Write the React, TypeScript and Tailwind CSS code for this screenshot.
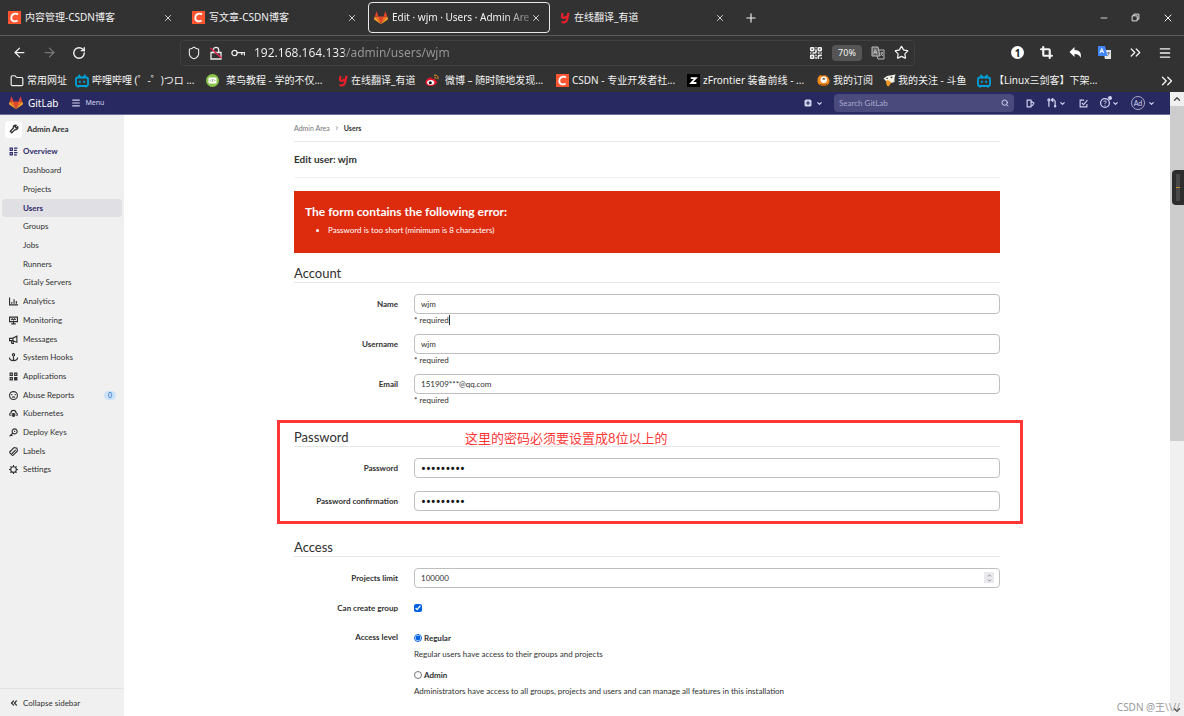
import React, { FC, ReactNode } from "react";
import {
  ArrowLeft,
  ArrowRight,
  ChevronDown,
  ChevronRight,
  ChevronUp,
  ChevronsLeft,
  ChevronsRight,
  Crop,
  Folder,
  Menu,
  Minus,
  Plus,
  QrCode,
  RotateCw,
  Search,
  Shield,
  Star,
  X,
} from "lucide-react";

interface IconProps {
  className?: string;
}

interface GlyphProps extends IconProps {
  children: ReactNode;
}

// 16px grid, outlined icon
const Glyph: FC<GlyphProps> = ({ className = "size-[9px]", children }) => (
  <svg
    viewBox="0 0 16 16"
    className={`shrink-0 ${className}`}
    fill="none"
    stroke="currentColor"
    strokeWidth="2"
    aria-hidden="true"
  >
    {children}
  </svg>
);

const Tanuki: FC<IconProps> = ({ className = "size-[14px]" }) => (
  <svg viewBox="0 0 36 34" className={`shrink-0 ${className}`} aria-hidden="true">
    <path d="M18 33 24.6 13H11.4z" fill="#e24329" />
    <path d="M18 33 11.4 13H2.1z" fill="#fc6d26" />
    <path d="M2.1 13 .1 19.2c-.2.6 0 1.2.5 1.5L18 33z" fill="#fca326" />
    <path d="M2.1 13h9.3L7.4.8c-.2-.6-1.1-.6-1.3 0z" fill="#e24329" />
    <path d="M18 33 24.6 13h9.3z" fill="#fc6d26" />
    <path d="m33.9 13 2 6.2c.2.6 0 1.2-.5 1.5L18 33z" fill="#fca326" />
    <path d="M33.9 13h-9.3l4-12.2c.2-.6 1.1-.6 1.3 0z" fill="#e24329" />
  </svg>
);

const CsdnLogo: FC = () => (
  <span className="flex size-[13px] shrink-0 items-center justify-center bg-[#fc5531]">
    <svg viewBox="0 0 13 13" className="size-[13px]" fill="none" stroke="#fff" strokeWidth="1.8">
      <path d="M10 3.4C8.4 2.3 3.800 1.800 3.300 6.400c-.4 4.200 3.700 4.400 6.300 3.300" />
    </svg>
  </span>
);

const YoudaoLogo: FC = () => (
  <svg viewBox="0 0 10 12" className="h-3 w-[10px] shrink-0" fill="none" stroke="#e8202c" strokeWidth="2.2">
    <path d="M2.500 1 2 4.500c-.2 2 3.500 1.700 4.500-.5M8.500.8 7.200 7c-.6 3-3.200 4-5.700 3" />
  </svg>
);

const BiliLogo: FC = () => (
  <svg viewBox="0 0 14 14" className="size-[14px] shrink-0" fill="none" stroke="#00a1d6" strokeWidth="1.8">
    <rect x="1" y="3.500" width="12" height="8.500" rx="1.500" />
    <path d="M3.500.8 5.600 3.300M10.500.8 8.400 3.300M4.800 6.800v2M9.200 6.800v2M3 12v1.500M11 12v1.500" />
  </svg>
);

const RunoobLogo: FC = () => (
  <svg viewBox="0 0 13 13" className="size-[13px] shrink-0">
    <circle cx="6.500" cy="6.500" r="6.500" fill="#8bc34a" />
    <rect x="2.500" y="3.500" width="8" height="6" rx="1" fill="#fff" />
    <path d="m5 5.500-1 1 1 1M8 5.500l1 1-1 1M6.800 5.200l-.6 2.600" fill="none" stroke="#558b2f" strokeWidth=".7" />
  </svg>
);

const WeiboLogo: FC = () => (
  <svg viewBox="0 0 14 13" className="h-[13px] w-[14px] shrink-0">
    <path d="M.5 8.500c0-3 5-6 6-4.500.4.6 0 1.200 0 1.200s3.500-1.400 3.800 1c1.600.6 2 1.500 1.400 2.900C10 13 .5 13 .5 8.500z" fill="#e6162d" />
    <ellipse cx="5.700" cy="8.600" rx="3.600" ry="2.500" fill="#fff" />
    <circle cx="5.300" cy="8.700" r="1.500" fill="#111" />
    <path d="M9 1.200c3-.6 4.600 1.400 3.900 4M9.300 3.200c1.300-.3 2 .6 1.700 1.700" fill="none" stroke="#f7931e" strokeWidth="1" />
  </svg>
);

const ZLogo: FC = () => (
  <svg viewBox="0 0 13 13" className="size-[13px] shrink-0">
    <path d="M0 0h13v13H0z" fill="#000" />
    <path d="M3.800 4.100h5L4.200 9h5.200" fill="none" stroke="#fff" strokeWidth="1.800" />
  </svg>
);

const FeedLogo: FC = () => (
  <svg viewBox="0 0 13 13" className="size-[13px] shrink-0">
    <path d="M1 3.500 3 1l2 .8 3.500-.6L11 3l1.500 3c.8 8-12.500 8-12 0z" fill="#f58a1f" />
    <circle cx="6.800" cy="5.800" r="3.200" fill="#fff" />
    <path d="M5.300 5.500a1.500 1.500 0 0 1 3 0z" fill="#4a2a10" />
    <path d="M3 10.300c2 1.200 5 1.200 7 0" stroke="#7a3b0a" fill="none" />
  </svg>
);

const DouyuLogo: FC = () => (
  <svg viewBox="0 0 13 13" className="size-[13px] shrink-0">
    <path d="M.5 4.500 4 2l8.500-1.500-1 3.500v4l-3.500 1-4-1z" fill="#f3f0e6" />
    <path d="M3.500 6.500c2-.5 4 .5 4.500 2.500l-2.500 3.500C3.500 12 2.500 9 3.500 6.500z" fill="#f59a23" />
    <path d="m2.500 4.500 2-1 .5 1.500zM7 3l2.500-.5L9 4.500z" fill="#333" />
  </svg>
);

interface TabProps {
  icon: ReactNode;
  title: string;
  isActive?: boolean;
}

const Tab: FC<TabProps> = ({ icon, title, isActive }) => (
  <div
    className={`flex h-[31px] w-[182px] shrink-0 items-center rounded-sm border pr-2 ${
      isActive ? "border-[#e8e8e8] pl-[5px]" : "border-transparent pl-[7px]"
    }`}
  >
    <button type="button" className="flex min-w-0 flex-1 items-center gap-1">
      {icon}
      <span
        className={`whitespace-nowrap ${
          isActive ? "[mask-image:linear-gradient(to_right,#000_82%,rgba(0,0,0,0.3))]" : ""
        }`}
      >
        {title}
      </span>
    </button>
    <button type="button" aria-label="Close tab">
      <X className="size-[10px]" strokeWidth={2} />
    </button>
  </div>
);

const bookmarks = [
  { icon: <Folder className="size-[14px] shrink-0" strokeWidth={2} />, label: "常用网址", width: "w-[65px]" },
  { icon: <BiliLogo />, label: "哔哩哔哩 (゜-゜)つロ ...", width: "w-[131px]" },
  { icon: <RunoobLogo />, label: "菜鸟教程 - 学的不仅...", width: "w-[132px]", gap: "gap-[7px]" },
  { icon: <YoudaoLogo />, label: "在线翻译_有道", width: "w-[87px]" },
  { icon: <WeiboLogo />, label: "微博 – 随时随地发现...", width: "w-[131px]", gap: "gap-[6px]" },
  { icon: <CsdnLogo />, label: "CSDN - 专业开发者社...", width: "w-[131px]" },
  { icon: <ZLogo />, label: "zFrontier 装备前线 - ...", width: "w-[130px]" },
  { icon: <FeedLogo />, label: "我的订阅", width: "w-[66px]" },
  { icon: <DouyuLogo />, label: "我的关注 - 斗鱼", width: "w-[94px]", gap: "gap-[2px]" },
  { icon: <BiliLogo />, label: "【Linux三剑客】下架...", width: "w-[124px]" },
];

const Browser: FC = () => (
  <header className="shrink-0 bg-[#323232] text-[#f2f2f2]">
    <div className="flex h-9 items-center justify-between border-b border-[#5c5c5c] text-[10px]">
      <div className="flex items-center gap-[2px]">
        <Tab icon={<CsdnLogo />} title="内容管理-CSDN博客" />
        <Tab icon={<CsdnLogo />} title="写文章-CSDN博客" />
        <Tab icon={<Tanuki />} title="Edit · wjm · Users · Admin Are" isActive />
        <Tab icon={<YoudaoLogo />} title="在线翻译_有道" />
        <button type="button" aria-label="New tab" className="ml-2">
          <Plus className="size-[14px]" strokeWidth={2} />
        </button>
      </div>
      <div className="flex items-center gap-[22px] pr-[10px]">
        <button type="button" aria-label="Minimize">
          <Minus className="size-[10px]" strokeWidth={2} />
        </button>
        <button type="button" aria-label="Restore">
          <Glyph>
            <path d="M2 5h9v9H2zM5 5V2h9v9h-3" strokeWidth="1.600" />
          </Glyph>
        </button>
        <button type="button" aria-label="Close window">
          <X className="size-3" strokeWidth={2} />
        </button>
      </div>
    </div>
    <div className="flex h-[33px] items-center pr-[12px] pl-3">
      <div className="flex w-[168px] shrink-0 items-center gap-[15px]">
        <button type="button" aria-label="Back">
          <ArrowLeft className="size-[15px]" strokeWidth={2} />
        </button>
        <button type="button" aria-label="Forward" className="text-[#777]">
          <ArrowRight className="size-[15px]" strokeWidth={2} />
        </button>
        <button type="button" aria-label="Reload">
          <RotateCw className="size-[14px]" strokeWidth={2.4} />
        </button>
      </div>
      <div className="flex h-[26px] min-w-0 max-w-[735px] flex-1 items-center rounded-sm border border-[#3f3f3f] pr-[5px] pl-[6px]">
        <Shield className="size-[14px] shrink-0" strokeWidth={1.8} />
        <svg viewBox="0 0 14 14" className="mx-2 size-[14px] shrink-0" fill="none" stroke="#eee" strokeWidth="1.300">
          <path d="M2 6.500h10V13H2zM4.300 6.500V4a2.700 2.700 0 0 1 5.400 0v2.500" />
          <path d="m1.500 2 11 10" stroke="#e22850" strokeWidth="1.600" />
        </svg>
        <svg viewBox="0 0 14 8" className="h-[8px] w-[14px] shrink-0" fill="none" stroke="#eee" strokeWidth="1.300">
          <circle cx="3.500" cy="4" r="2.600" />
          <path d="M6 3.600h7.500v2.800M10.800 3.600v2.400" />
        </svg>
        <input
          type="text"
          aria-label="Address"
          defaultValue="192.168.164.133/admin/users/wjm"
          className="ml-[9px] min-w-0 flex-1 bg-[linear-gradient(to_right,#f2f2f2_90px,#999_90px)] bg-clip-text text-[12px] text-transparent outline-none"
        />
        <QrCode className="size-[14px] shrink-0" strokeWidth={2.8} />
        <button type="button" className="mx-[9px] h-4 w-[30px] rounded-sm bg-[#555] text-center text-[9px] leading-4">
          70%
        </button>
        <svg viewBox="0 0 14 14" className="mr-[9px] size-[14px] shrink-0" fill="none" stroke="#bbb" strokeWidth="1">
          <path d="M1 1h6l2 9H1z" fill="#666" />
          <path d="M8 4h5v9H7l-1-3M2.500 8 4.300 3.500 6 8M3 6.500h2.500M9.500 7H12M11 6v1c0 1-.5 2-1.500 2.500M10 8l2 2" />
        </svg>
        <Star className="size-[15px] shrink-0" strokeWidth={2} />
      </div>
      <div className="ml-auto flex items-center gap-4">
        <span className="flex size-[13px] items-center justify-center rounded-full bg-white text-[10px] leading-none font-bold text-[#222]">
          1
        </span>
        <Crop className="size-[13px]" strokeWidth={4} />
        <svg viewBox="0 0 13 12" className="h-3 w-[13px]" fill="#fff">
          <path d="M5.500 0v3c5 0 7.500 3 6 8-.8-2.500-2.500-4-6-4v3L.5 5z" />
        </svg>
        <svg viewBox="0 0 13 13" className="size-[13px]">
          <path d="M5 4h8v9H7z" fill="#e4e6e8" />
          <path d="M0 0h7l2.500 10H0z" fill="#4285f4" />
          <path d="M2 7 3.800 2.500 5.600 7M2.700 5.500h2.200" fill="none" stroke="#fff" />
          <path d="M9 7h3M10.700 6v1.500c0 1-.6 2-1.500 2.500" fill="none" stroke="#667" strokeWidth=".8" />
        </svg>
        <ChevronsRight className="-mr-[2px] size-[17px]" strokeWidth={1.8} />
        <Menu className="size-[14px]" strokeWidth={2.2} />
      </div>
    </div>
    <nav className="flex h-[23px] items-center justify-between pr-2 pl-[10px] text-[10px]">
      <div className="flex min-w-0 overflow-hidden">
        {bookmarks.map((item) => (
          <a
            href="#"
            key={item.label}
            className={`flex shrink-0 items-center whitespace-nowrap ${item.gap || "gap-[3px]"} ${item.width}`}
          >
            {item.icon}
            {item.label}
          </a>
        ))}
      </div>
      <ChevronsRight className="size-[18px] shrink-0" strokeWidth={1.8} />
    </nav>
  </header>
);

const Navbar: FC = () => (
  <nav className="flex h-[23px] shrink-0 items-center justify-between border-b border-[#6d6da0] bg-[#292961] pr-[15px] pl-[9px] text-[#d1d1f0]">
    <div className="flex items-center">
      <a href="#" className="flex items-center gap-[5px] text-[10px] text-white">
        <Tanuki />
        <span className="font-['Noto_Sans',sans-serif]">GitLab</span>
      </a>
      <button type="button" className="ml-[13px] flex items-center gap-1 text-[7px]">
        <Menu className="size-[10px]" strokeWidth={2.8} />
        <span className="font-['Noto_Sans',sans-serif]">Menu</span>
      </button>
    </div>
    <div className="flex items-center">
      <button type="button" aria-label="Create new" className="flex items-center gap-1">
        <svg viewBox="0 0 16 16" className="size-2">
          <rect x="1" y="1" width="14" height="14" rx="3" fill="currentColor" />
          <path d="M8 4v8M4 8h8" stroke="#292961" strokeWidth="2" />
        </svg>
        <ChevronDown className="size-[7px]" strokeWidth={4} />
      </button>
      <div className="mr-3 ml-[11px] flex h-[18px] w-[180px] items-center rounded-sm bg-[#4a4a7d] px-[5px]">
        <input
          type="search"
          aria-label="Search GitLab"
          placeholder="Search GitLab"
          className="min-w-0 flex-1 bg-transparent text-[8px] outline-none placeholder:text-[#a9a9cb]"
        />
        <Search className="size-2" strokeWidth={3} />
      </div>
      <button type="button" aria-label="Issues">
        <Glyph>
          <path d="M2 2h7v12H2zM9 4l5 3-2 4-3 1" />
        </Glyph>
      </button>
      <button type="button" aria-label="Merge requests" className="ml-3 flex items-center gap-[2px]">
        <Glyph className="size-[10px]">
          <path d="M3 5v9M8 3h3c2 0 2 1 2 3v8M10 0 7 3l3 3" />
          <circle cx="3" cy="3" r="1.500" />
          <circle cx="13" cy="13" r="1" />
        </Glyph>
        <ChevronDown className="size-[7px]" strokeWidth={4} />
      </button>
      <button type="button" aria-label="To-Do List" className="ml-[13px]">
        <Glyph>
          <path d="M9 2H2v12h12V9M5 7l3 3 7-8" />
        </Glyph>
      </button>
      <button type="button" aria-label="Help" className="relative ml-3 flex items-center gap-[2px]">
        <Glyph className="size-[10px]">
          <circle cx="8" cy="8" r="7" />
          <path d="M6 6c.5-2 4-2 4 0 0 1.500-2 1.500-2 3.500M8 11v1.500" strokeWidth="1.600" />
        </Glyph>
        <span className="absolute -top-[2px] left-2 size-1 rounded-full bg-[#d1d1f0]" />
        <ChevronDown className="size-[7px]" strokeWidth={4} />
      </button>
      <button type="button" aria-label="Account menu" className="ml-3 flex items-center gap-[3px]">
        <span className="flex size-[14px] items-center justify-center rounded-full border border-[#a9a9cb] text-[7px] leading-none">
          Ad
        </span>
        <ChevronDown className="size-[7px]" strokeWidth={4} />
      </button>
    </div>
  </nav>
);

const overviewItems = ["Dashboard", "Projects", "Users", "Groups", "Jobs", "Runners", "Gitaly Servers"];

const menuItems = [
  { label: "Analytics", icon: <path d="M1 1v13h15M5 12V9M9 12V4M13 12V7" /> },
  { label: "Monitoring", icon: <path d="M1 2h14v8H1zM4 14h8M8 10v4M4 7l2-2 2 2 2-2 2 2" /> },
  { label: "Messages", icon: <path d="M1 6h5l8-4v11L6 10H1zM4 10l1 5h3l-1-4M7 6v4" /> },
  { label: "System Hooks", icon: <path d="M8 5v9M1 9c0 6 14 6 14 0M1 8v3M15 8v3M8 1a1.500 1.500 0 1 0 0 4 1.500 1.500 0 1 0 0-4" /> },
  { label: "Applications", icon: <path d="M2 2h4v4H2zM10 2h4v4h-4zM2 10h4v4H2zM10 10h4v4h-4zM12 10v4" /> },
  {
    label: "Abuse Reports",
    icon: <path d="M8 1a7 7 0 1 0 0 14A7 7 0 1 0 8 1M5 5.500v2M11 5.500v2M5.500 11.500c1-1.500 4-1.500 5 0" />,
    badge: "0",
  },
  {
    label: "Kubernetes",
    icon: <path d="M3 12C0 11 1 7 3.500 7c0-6 9-6 9 0C16 8 15 11.500 13 12M8 8a2.500 2.500 0 1 0 0 5 2.500 2.500 0 1 0 0-5M8 7v7" />,
  },
  {
    label: "Deploy Keys",
    icon: <path d="M7 9 1 15M10 1.500a4.500 4.500 0 1 0 0 9 4.500 4.500 0 1 0 0-9M10 5v2M3 11l3 3" />,
  },
  { label: "Labels", icon: <path d="M2 8 9 1l5 1 1 5-7 7c-1 1-2 1-3 0l-3-3c-1-1-1-2 0-3zM5 12l7-7" /> },
  {
    label: "Settings",
    icon: (
      <path d="M8 3a5 5 0 1 0 0 10A5 5 0 1 0 8 3M8 0v3M8 13v3M0 8h3M13 8h3M2.500 2.500l2 2M11.500 11.500l2 2M2.500 13.500l2-2M11.500 4.500l2-2" />
    ),
  },
];

const Sidebar: FC = () => (
  <aside className="flex w-[124px] shrink-0 flex-col bg-[#f0f0f0] text-[8px] text-[#303030]">
    <a href="#" className="mt-[5px] flex h-[18px] items-center gap-[5px] pl-[5px] font-bold">
      <span className="flex size-[17px] items-center justify-center rounded-sm bg-white">
        <svg viewBox="0 0 16 16" className="size-[10px]" fill="none" stroke="#303030" strokeWidth="2">
          <path d="M14 4.500 11.500 6.500l-2-2L11.500 2c-3-1-5.500 1.500-4.500 4.500l-5 5 2.500 2.500 5-5c3 1 5.500-1.500 4.500-4.500z" />
        </svg>
      </span>
      Admin Area
    </a>
    <a href="#" className="mt-[3px] flex h-5 items-center gap-[5px] pl-[9px] font-bold text-[#2f2a6b]">
      <Glyph>
        <path d="M2 2h4v4H2zM2 10h4v4H2zM9 2h6M9 6h5M9 10h6M9 14h5" />
      </Glyph>
      Overview
    </a>
    <ul className="px-[2px]">
      {overviewItems.map((label) => (
        <li key={label} className="pb-px nth-[3n]:pb-0">
          <a
            href="#"
            className={`flex h-[18px] items-center rounded-sm pl-[21px] ${
              label === "Users" ? "bg-[#dfdfe4] font-bold text-[#2f2a6b]" : ""
            }`}
          >
            {label}
          </a>
        </li>
      ))}
    </ul>
    <ul>
      {menuItems.map((item) => (
        <li key={item.label} className="pb-px nth-[3n]:pb-0">
          <a href="#" className="flex h-[18px] items-center gap-[5px] pr-2 pl-[9px]">
            <Glyph>{item.icon}</Glyph>
            {item.label}
            {item.badge && (
              <span className="ml-auto h-[9px] rounded-full bg-[#cbe2f9] px-1 text-[7px] leading-[9px] text-[#1068bf]">
                {item.badge}
              </span>
            )}
          </a>
        </li>
      ))}
    </ul>
    <button type="button" className="mt-auto flex h-7 items-center gap-1 border-t border-[#e3e3e3] pl-[9px]">
      <ChevronsLeft className="size-[10px]" strokeWidth={3} />
      Collapse sidebar
    </button>
  </aside>
);

interface FieldProps {
  id: string;
  label: string;
  value: string;
  type?: string;
  children?: ReactNode;
}

const Field: FC<FieldProps> = ({ id, label, value, type = "text", children }) => (
  <div className="grid grid-cols-[104px_minmax(0,1fr)] gap-x-4">
    <label htmlFor={id} className="text-right leading-5 font-bold">
      {label}
    </label>
    <div>
      <div className="relative">
        <input
          id={id}
          type={type}
          defaultValue={value}
          className={`block h-5 w-full rounded-sm border border-[#bfbfbf] bg-white px-[6px] leading-[18px] outline-none [appearance:textfield] [&::-webkit-inner-spin-button]:appearance-none ${
            type === "password" ? "font-['Noto_Sans',sans-serif] text-[13px] text-[#111]" : ""
          }`}
        />
        {type === "number" && (
          <span className="absolute top-1 right-[6px] flex h-[11px] w-[10px] flex-col items-center justify-center bg-[#e9e9ed] text-[#555]">
            <ChevronUp className="size-[5px]" strokeWidth={3} />
            <ChevronDown className="size-[5px]" strokeWidth={3} />
          </span>
        )}
      </div>
      {children}
    </div>
  </div>
);

interface SectionProps {
  title: string;
  children: ReactNode;
}

const Section: FC<SectionProps> = ({ title, children }) => (
  <fieldset className="w-full">
    <legend className="mb-[11px] h-[19px] w-full border-b border-[#e6e6e6] text-[13px] leading-[18px]">{title}</legend>
    {children}
  </fieldset>
);

const EditUser: FC = () => (
  <main className="min-w-0 flex-1 overflow-hidden bg-white text-[8px] text-[#303030]">
    <div className="mx-auto max-w-[706px]">
      <div className="flex h-[27px] items-center gap-1 border-b border-[#e8e8e8] text-[7px]">
        <a href="#" className="text-[#777]">
          Admin Area
        </a>
        <ChevronRight className="size-[6px] text-[#777]" strokeWidth={3} />
        <a href="#" className="font-bold">
          Users
        </a>
      </div>
      <h3 className="mb-[13px] flex h-9 items-center border-b border-[#f2f2f2] text-[10px] font-bold">
        Edit user: wjm
      </h3>
      <div className="mb-[11px] h-[62px] bg-[#dd2b0e] px-[11px] pt-3 text-white" role="alert">
        <h4 className="text-[12px] leading-[18px] font-bold">The form contains the following error:</h4>
        <ul className="list-disc pl-[23px] leading-[18px]">
          <li>Password is too short (minimum is 8 characters)</li>
        </ul>
      </div>
      <form>
        <Section title="Account">
          <div className="flex flex-col gap-2">
            <Field id="name" label="Name" value="wjm">
              <p className="h-3 leading-3">
                <span className="border-r border-[#303030]">* required</span>
              </p>
            </Field>
            <Field id="username" label="Username" value="wjm">
              <p className="h-3 leading-3">* required</p>
            </Field>
            <Field id="email" label="Email" value="151909***@qq.com">
              <p className="h-3 leading-3">* required</p>
            </Field>
          </div>
        </Section>
        <div className="relative mt-[22px]">
          <Section title="Password">
            <div className="flex flex-col gap-[13px]">
              <Field id="password" label="Password" value="123456789" type="password" />
              <Field id="confirmation" label="Password confirmation" value="123456789" type="password" />
            </div>
          </Section>
          <div className="pointer-events-none absolute -top-2 -right-[23px] -bottom-[13px] -left-[17px] border-[3px] border-[#ff3636]" />
          <p className="absolute top-[1px] left-[171px] text-[13px] leading-[18px] text-[#ff3636]">
            这里的密码必须要设置成8位以上的
          </p>
        </div>
        <div className="mt-[27px]">
          <Section title="Access">
            <Field id="limit" label="Projects limit" value="100000" type="number" />
            <div className="mt-[11px] grid grid-cols-[104px_minmax(0,1fr)] items-center gap-x-4 leading-[18px]">
              <label htmlFor="group" className="text-right font-bold">
                Can create group
              </label>
              <input id="group" type="checkbox" defaultChecked className="size-2 accent-[#0060df]" />
            </div>
            <div className="mt-3 grid grid-cols-[104px_minmax(0,1fr)] gap-x-4" role="radiogroup" aria-labelledby="level">
              <span id="level" className="text-right leading-[17px] font-bold">
                Access level
              </span>
              <div className="leading-4">
                <label className="flex h-[17px] items-center gap-[2px] font-bold">
                  <input type="radio" name="level" defaultChecked className="size-2 accent-[#0060df]" />
                  Regular
                </label>
                <p className="mb-1">Regular users have access to their groups and projects</p>
                <label className="flex h-[17px] items-center gap-[2px] font-bold">
                  <input type="radio" name="level" className="size-2 accent-[#0060df]" />
                  Admin
                </label>
                <p>
                  Administrators have access to all groups, projects and users and can manage all features in this
                  installation
                </p>
              </div>
            </div>
          </Section>
        </div>
      </form>
    </div>
  </main>
);

const App: FC = () => (
  <div className="relative flex h-screen flex-col overflow-hidden font-['Noto_Sans','Noto_Sans_CJK_SC',sans-serif]">
    <Browser />
    <div className="flex min-h-0 flex-1">
      <div className="flex min-w-0 flex-1 flex-col font-['Lato','Noto_Sans_CJK_SC',sans-serif]">
        <Navbar />
        <div className="flex min-h-0 flex-1">
          <Sidebar />
          <EditUser />
        </div>
      </div>
      <div className="relative flex w-[14px] shrink-0 flex-col items-center bg-[#f0f0f0] text-[#444]">
        <ChevronUp className="my-[2px] size-[10px]" strokeWidth={3} />
        <div className="h-[335px] w-full bg-[#cdcdcd]" />
        <ChevronDown className="mt-auto mb-px size-[10px]" strokeWidth={3} />
        <div className="absolute top-[78px] right-0 flex h-[35px] w-3 items-center justify-center rounded-l-sm bg-[#2e2e2e]">
          <div className="flex h-[27px] w-1 items-center bg-[#484848]">
            <span className="h-px w-full bg-[#c98a2b]" />
          </div>
        </div>
      </div>
    </div>
    <span className="absolute right-1 bottom-[2px] text-[10px] leading-[14px] text-[#999]">CSDN @王\\//</span>
  </div>
);

export default App;
